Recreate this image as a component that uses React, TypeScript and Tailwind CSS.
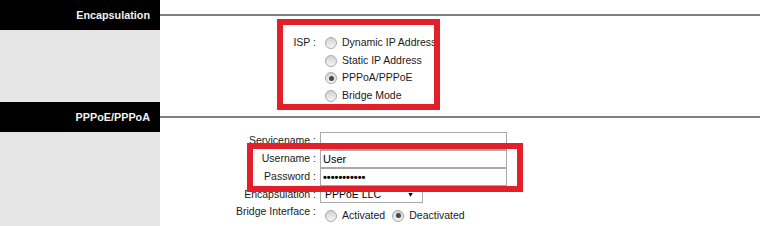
import React from "react";

const Radio = ({ checked = false }: { checked?: boolean }) => (
  <span className="inline-flex shrink-0 w-[12px] h-[12px] rounded-full border border-[#a8a8a8] bg-linear-to-b from-[#d2d2d2] to-[#f5f5f5] items-center justify-center">
    {checked && <span className="w-[5px] h-[5px] rounded-full bg-[#484848]" />}
  </span>
);

const Header = ({ title }: { title: string }) => (
  <div className="flex h-[30px]">
    <div className="w-[160px] bg-black text-[#f2f2f2] font-bold text-[10.8px] flex items-center justify-end pr-[10px]">
      {title}
    </div>
    <div className="flex-1 flex items-center pr-[5px]">
      <div className="h-[2px] w-full bg-[#808080]" />
    </div>
  </div>
);

const RadioRow = ({ label, checked }: { label: string; checked?: boolean }) => (
  <div className="h-[17.7px] flex items-center gap-[5px] whitespace-nowrap">
    <Radio checked={checked} />
    <span>{label}</span>
  </div>
);

const Label = ({ children, h = "h-[18px]" }: { children: React.ReactNode; h?: string }) => (
  <div className={`w-[156px] shrink-0 text-right whitespace-nowrap flex items-center justify-end ${h}`}>{children}</div>
);

export default function App() {
  return (
    <div className="relative w-[765px] h-[226px] overflow-hidden bg-white font-['Liberation_Sans',Arial,sans-serif] text-[10.5px] text-[#1a1a1a]">
      <Header title="Encapsulation" />
      <div className="flex h-[72px]">
        <div className="w-[160px] bg-[#e6e6e6]" />
        <div className="flex pt-[4px] items-start">
          <Label>ISP :</Label>
          <div className="flex flex-col pl-[9px]">
            <RadioRow label="Dynamic IP Address" />
            <RadioRow label="Static IP Address" />
            <RadioRow label="PPPoA/PPPoE" checked />
            <RadioRow label="Bridge Mode" />
          </div>
        </div>
      </div>
      <Header title="PPPoE/PPPoA" />
      <div className="flex h-[94px]">
        <div className="w-[160px] bg-[#e6e6e6]" />
        <div className="flex flex-col">
          <div className="flex">
            <Label>Servicename :</Label>
            <div className="ml-[4px] w-[187px] h-[18px] border border-[#a9a9a9] bg-white" />
          </div>
          <div className="flex">
            <Label>Username :</Label>
            <div className="ml-[4px] w-[187px] h-[18px] border border-[#a9a9a9] bg-white flex items-center pl-[2px] text-[11px] text-black">
              User
            </div>
          </div>
          <div className="flex">
            <Label>Password :</Label>
            <div className="ml-[4px] w-[187px] h-[18px] border border-[#a9a9a9] bg-white flex items-center pl-[2px] text-[11px] font-bold text-black">
              •••••••••••
            </div>
          </div>
          <div className="flex mt-[1px]">
            <Label h="h-[16px]">Encapsulation :</Label>
            <div className="ml-[4px] w-[103px] h-[16px] border border-[#a9a9a9] bg-white flex items-center justify-between pl-[4px] pr-[8px] text-black">
              <span>PPPoE LLC</span>
              <span className="text-[7px]">▼</span>
            </div>
          </div>
          <div className="flex mt-[1px] items-start">
            <Label h="h-[16px]">Bridge Interface :</Label>
            <div className="ml-[9px] flex items-center pt-[4px] gap-[5px] whitespace-nowrap">
              <Radio />
              <span className="mr-[2px]">Activated</span>
              <Radio checked />
              <span>Deactivated</span>
            </div>
          </div>
        </div>
      </div>
      <div className="absolute left-[277px] top-[19px] w-[163px] h-[91px] border-[6px] border-[#e3202a]" />
      <div className="absolute left-[247px] top-[143px] w-[276px] h-[49px] border-[6px] border-[#e3202a]" />
    </div>
  );
}
